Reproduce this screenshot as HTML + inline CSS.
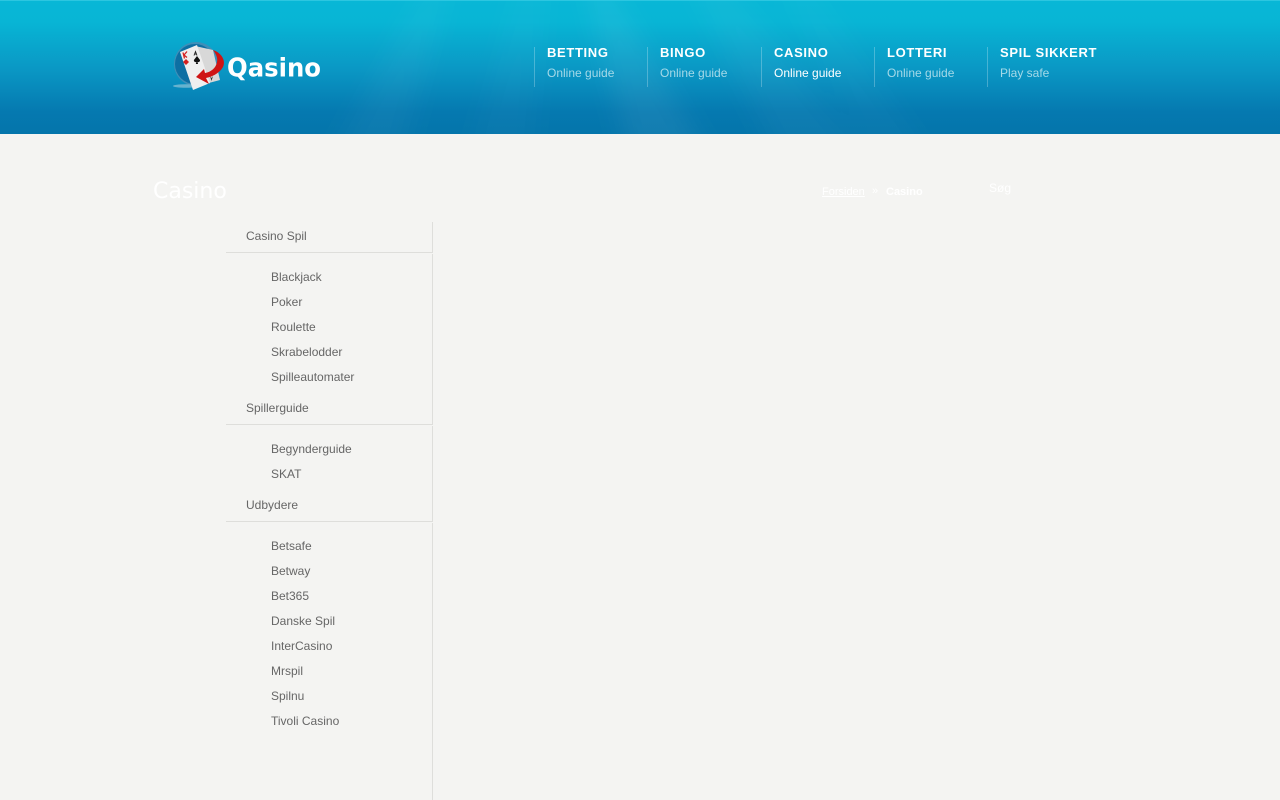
<!DOCTYPE html>
<html lang="da">
<head>
<meta charset="utf-8">
<title>Casino</title>
<style>
html,body{margin:0;padding:0;width:1280px;height:800px;overflow:hidden;background:#f4f4f2;font-family:"Liberation Sans",sans-serif;}
.abs{position:absolute;white-space:nowrap;}
#hd{position:absolute;left:0;top:0;width:1280px;height:134px;background:linear-gradient(#08b7d6 0,#08b5d5 22px,#0a97c4 70px,#0579b0 112px,#0475ab 134px);overflow:hidden;}
#hd .top{position:absolute;left:0;top:0;width:1280px;height:1px;background:#2cc6e0;}
#hd svg.rays{position:absolute;left:0;top:0;}
.sep{position:absolute;top:47px;width:1px;height:40px;background:rgba(255,255,255,.25);}
.t{position:absolute;top:45px;font-size:13px;line-height:16px;font-weight:bold;letter-spacing:.65px;color:#fff;white-space:nowrap;}
.s{position:absolute;top:65px;font-size:12px;line-height:16px;color:#a5d9e8;white-space:nowrap;}
.s.on{color:#fff;}
.m{position:absolute;font-size:12px;line-height:16px;color:#666;white-space:nowrap;}
.hr{position:absolute;left:226px;width:207px;height:1px;background:#dededb;}
.gap{position:absolute;left:432px;width:1px;height:1px;background:#f4f4f2;}
</style>
</head>
<body>
<div id="hd">
  <svg class="rays" width="1280" height="134" viewBox="0 0 1280 134">
    <defs><filter id="b" x="-50%" y="-50%" width="200%" height="200%"><feGaussianBlur stdDeviation="12"/></filter></defs>
    <g filter="url(#b)" fill="#fff">
      <polygon points="585,-20 605,-20 710,160 630,160" opacity=".06"/>
      <polygon points="430,-20 450,-20 400,160 330,160" opacity=".035"/>
      <polygon points="520,-20 545,-20 530,160 470,160" opacity=".025"/>
      <polygon points="690,-20 725,-20 870,160 780,160" opacity=".035"/>
      <polygon points="780,-20 805,-20 930,160 870,160" opacity=".025"/>
    </g>
  </svg>
  <div class="top"></div>

  <svg class="abs" style="left:170px;top:38px" width="160" height="56" viewBox="170 38 160 56">
    <circle cx="196" cy="64" r="22" fill="#3f8fb8"/>
    <circle cx="195" cy="64" r="20" fill="#0d6fa3"/>
    <ellipse cx="186" cy="86" rx="13" ry="1.800" fill="#8fc3d6" opacity=".7"/>
    <polygon points="195,46 213,50 220,80 205,84" fill="#d8d8d8"/>
    <polygon points="180,52 197,45 210,83 193,90" fill="#efefef"/>
    <path d="M183 52.500l1.500 6M187 51.500l-3 3.500 3 2.500" stroke="#d42020" stroke-width="1.300" fill="none"/>
    <polygon points="186,59 189,62 186,65 183,62" fill="#d42020"/>
    <path d="M194 55.500l1.500-4 1.500 4M194.700 54h1.800" stroke="#222" stroke-width=".9" fill="none"/>
    <path d="M197 56l3 4a1.800 1.800 0 0 1-2.500 2l.6 2h-2.300l.6-2a1.800 1.800 0 0 1-2.500-2z" fill="#111"/>
    <path d="M210 76l1.500 2 1.500-2-1.500 5z" fill="#333"/>
    <path d="M213 50C222 53 226 61 223 67C219 74 211 77 206 78L209 84L196 77L204 69L205 73C211 72 216 68 217 62C218 58 216 54 213 50Z" fill="#cf1414"/>
    <text x="227" y="76.500" font-family="'DejaVu Sans',sans-serif" font-weight="bold" font-size="26" fill="#fff" textLength="94" lengthAdjust="spacingAndGlyphs">Qasino</text>
  </svg>

  <div class="sep" style="left:534px"></div>
  <div class="t" style="left:547px">BETTING</div>
  <div class="s" style="left:547px">Online guide</div>

  <div class="sep" style="left:647px"></div>
  <div class="t" style="left:660px">BINGO</div>
  <div class="s" style="left:660px">Online guide</div>

  <div class="sep" style="left:761px"></div>
  <div class="t" style="left:774px">CASINO</div>
  <div class="s on" style="left:774px">Online guide</div>

  <div class="sep" style="left:874px"></div>
  <div class="t" style="left:887px">LOTTERI</div>
  <div class="s" style="left:887px">Online guide</div>

  <div class="sep" style="left:987px"></div>
  <div class="t" style="left:1000px">SPIL SIKKERT</div>
  <div class="s" style="left:1000px">Play safe</div>
</div>

<div class="abs" style="left:153px;top:177px;font-family:'DejaVu Sans',sans-serif;font-size:22px;line-height:30px;color:#fff;">Casino</div>
<a class="abs" style="left:822px;top:184px;font-size:11px;line-height:16px;color:#fff;text-decoration:underline;">Forsiden</a>
<div class="abs" style="left:872px;top:183px;font-size:11px;line-height:16px;color:#fff;">»</div>
<div class="abs" style="left:886px;top:184px;font-size:11px;line-height:16px;font-weight:bold;color:#fff;">Casino</div>
<div class="abs" style="left:989px;top:180px;font-size:12px;line-height:16px;color:#fff;">Søg</div>

<div class="abs" style="left:432px;top:222px;width:1px;height:578px;background:#dededb;"></div>

<div class="hr" style="top:252px"></div><div class="gap" style="top:253px"></div>
<div class="hr" style="top:424px"></div><div class="gap" style="top:425px"></div>
<div class="hr" style="top:521px"></div><div class="gap" style="top:522px"></div>

<div class="m" style="left:246px;top:228px">Casino Spil</div>
<div class="m" style="left:271px;top:269px">Blackjack</div>
<div class="m" style="left:271px;top:294px">Poker</div>
<div class="m" style="left:271px;top:319px">Roulette</div>
<div class="m" style="left:271px;top:344px">Skrabelodder</div>
<div class="m" style="left:271px;top:369px">Spilleautomater</div>

<div class="m" style="left:246px;top:400px">Spillerguide</div>
<div class="m" style="left:271px;top:441px">Begynderguide</div>
<div class="m" style="left:271px;top:466px">SKAT</div>

<div class="m" style="left:246px;top:497px">Udbydere</div>
<div class="m" style="left:271px;top:538px">Betsafe</div>
<div class="m" style="left:271px;top:563px">Betway</div>
<div class="m" style="left:271px;top:588px">Bet365</div>
<div class="m" style="left:271px;top:613px">Danske Spil</div>
<div class="m" style="left:271px;top:638px">InterCasino</div>
<div class="m" style="left:271px;top:663px">Mrspil</div>
<div class="m" style="left:271px;top:688px">Spilnu</div>
<div class="m" style="left:271px;top:713px">Tivoli Casino</div>
</body>
</html>
